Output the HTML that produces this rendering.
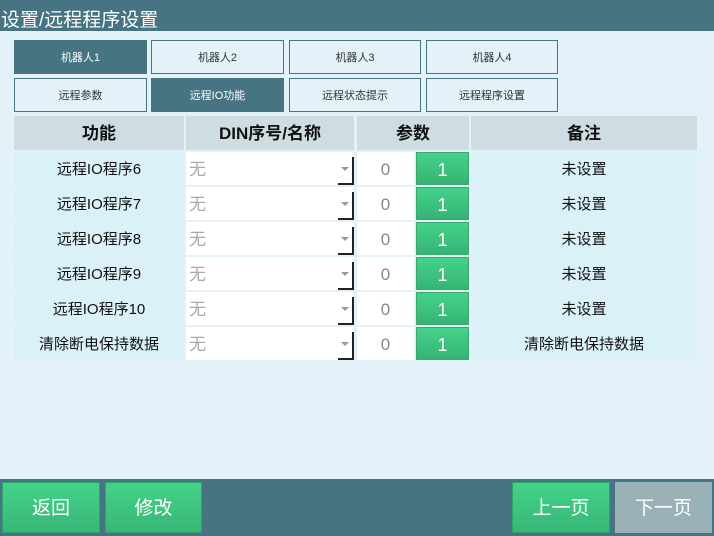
<!DOCTYPE html>
<html><head><meta charset="utf-8"><style>
*{margin:0;padding:0;box-sizing:border-box}
body{width:714px;height:536px;background:#e2f2f8;position:relative;overflow:hidden;font-family:"Liberation Sans","Noto Sans CJK SC",sans-serif}
.a{position:absolute}
.hdr{left:0;top:0;width:714px;height:31px;background:#467482;color:#fff;font-size:19px;line-height:42px;padding-left:1px;overflow:hidden}
.tab{position:absolute;height:34px;border:1px solid #467482;background:#e2f2f8;color:#333;font-size:11px;text-align:center;line-height:34px}
.tab.on{background:#467482;color:#fff}
.c{position:absolute;text-align:center;font-size:15px;color:#111}
.h{background:#cfdde2;font-weight:bold;font-size:17px;line-height:36px;height:34px;top:116px}
.f{background:#d9f1f7;height:33px;line-height:36px}
.s{background:#fff;height:33px;line-height:36px;text-align:left;padding-left:3px;color:#aaa;font-size:17px}
.s:after{content:"";position:absolute;right:0;bottom:0;width:14px;height:26px;border-right:2px solid #222;border-bottom:2px solid #222}
.s i{position:absolute;right:5px;top:15px;border-left:4px solid transparent;border-right:4px solid transparent;border-top:4px solid #999}
.z{background:#fff;color:#888;font-size:17px;height:33px;line-height:36px}
.g{background:linear-gradient(#44d38b,#36b374);color:#fff;font-size:18px;height:33px;line-height:34px;border:1px solid #3aa873}
.bot{left:0;top:479px;width:714px;height:57px;background:#467482}
.b{position:absolute;top:482px;height:51px;background:linear-gradient(#44d38b,#38b676);border:1px solid #2ea565;color:#fff;font-size:19px;text-align:center;line-height:51px}
</style></head><body>
<div class="a hdr">设置/远程程序设置</div>
<div class="tab on" style="left:14px;top:40px;width:133px">机器人1</div>
<div class="tab" style="left:151px;top:40px;width:133px">机器人2</div>
<div class="tab" style="left:289px;top:40px;width:132px">机器人3</div>
<div class="tab" style="left:426px;top:40px;width:132px">机器人4</div>
<div class="tab" style="left:14px;top:78px;width:133px">远程参数</div>
<div class="tab on" style="left:151px;top:78px;width:133px">远程IO功能</div>
<div class="tab" style="left:289px;top:78px;width:132px">远程状态提示</div>
<div class="tab" style="left:426px;top:78px;width:132px">远程程序设置</div>
<div class="c h" style="left:14px;width:170px">功能</div>
<div class="c h" style="left:186px;width:168px">DIN序号/名称</div>
<div class="c h" style="left:357px;width:112px">参数</div>
<div class="c h" style="left:471px;width:226px">备注</div>
<script>
var n=["远程IO程序6","远程IO程序7","远程IO程序8","远程IO程序9","远程IO程序10","清除断电保持数据"];
var r=["未设置","未设置","未设置","未设置","未设置","清除断电保持数据"];
for(var i=0;i<6;i++){var t=152+i*35;
document.write('<div class="c f" style="left:14px;width:170px;top:'+t+'px">'+n[i]+'</div>'+
'<div class="c s" style="left:186px;width:168px;top:'+t+'px">无<i></i></div>'+
'<div class="c z" style="left:357px;width:57px;top:'+t+'px">0</div>'+
'<div class="c g" style="left:416px;width:53px;top:'+t+'px">1</div>'+
'<div class="c f" style="left:471px;width:226px;top:'+t+'px">'+r[i]+'</div>');}
</script>
<div class="a bot"></div>
<div class="b" style="left:2px;width:98px">返回</div>
<div class="b" style="left:105px;width:97px">修改</div>
<div class="b" style="left:512px;width:98px">上一页</div>
<div class="b" style="left:615px;width:97px;background:#9ab1b8;border-color:#9ab1b8">下一页</div>
</body></html>
